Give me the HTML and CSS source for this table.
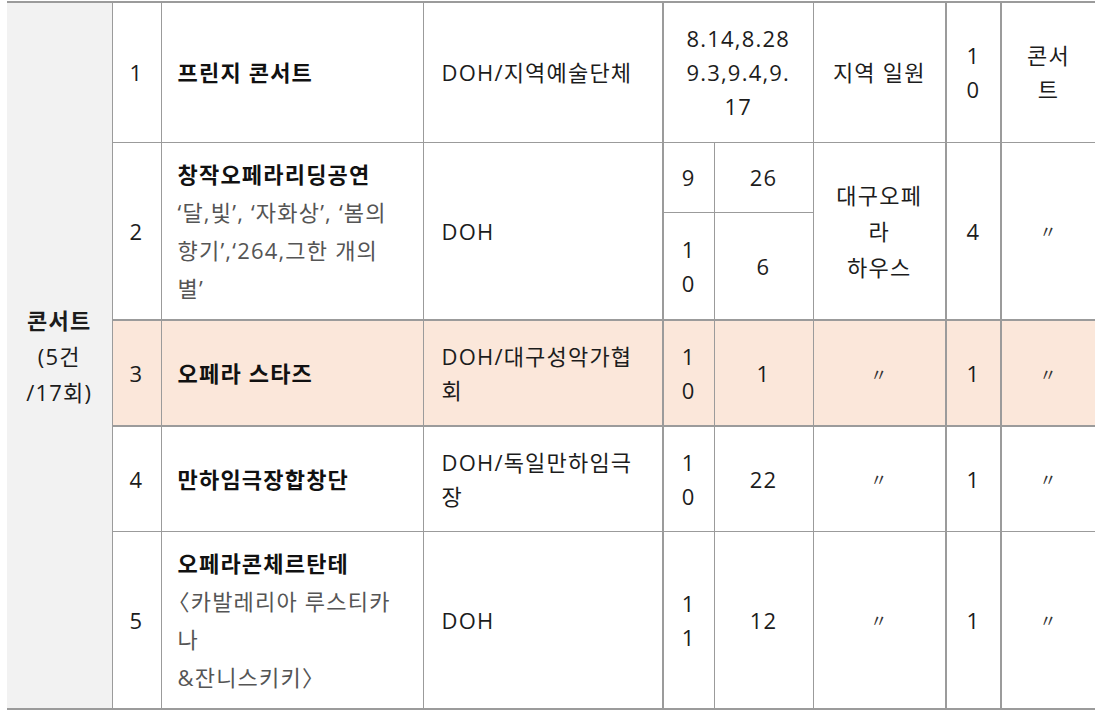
FILE: index.html
```html
<!DOCTYPE html>
<html lang="ko">
<head>
<meta charset="utf-8">
<title>콘서트 일정</title>
<link rel="stylesheet" href="styles.css">
</head>
<body>
<table class="plan">
  <colgroup>
    <col class="c-cat"><col class="c-num"><col class="c-title"><col class="c-org"><col class="c-da"><col class="c-db"><col class="c-venue"><col class="c-cnt"><col class="c-genre">
  </colgroup>
  <tbody>
    <tr class="r1">
      <td class="cat" rowspan="6"><strong>콘서트</strong><br>(5건<br>/17회)</td>
      <td class="num">1</td>
      <td class="title"><strong>프린지 콘서트</strong></td>
      <td class="org">DOH/지역예술단체</td>
      <td class="mid date" colspan="2">8.14,8.28<br>9.3,9.4,9.<br>17</td>
      <td class="mid venue">지역 일원</td>
      <td class="mid cnt">1<br>0</td>
      <td class="mid genre">콘서<br>트</td>
    </tr>
    <tr class="r2a">
      <td class="num span2" rowspan="2">2</td>
      <td class="title span2" rowspan="2"><strong>창작오페라리딩공연</strong><br><span class="sub">‘달,빛’, ‘자화상’, ‘봄의<br>향기’,‘264,그한 개의<br>별’</span></td>
      <td class="org span2" rowspan="2">DOH</td>
      <td class="mid">9</td>
      <td class="mid">26</td>
      <td class="mid venue span2" rowspan="2">대구오페<br>라<br>하우스</td>
      <td class="mid cnt span2" rowspan="2">4</td>
      <td class="mid genre span2" rowspan="2"><span class="ditto">〃</span></td>
    </tr>
    <tr class="r2b">
      <td class="mid">1<br>0</td>
      <td class="mid">6</td>
    </tr>
    <tr class="r3 hl">
      <td class="num">3</td>
      <td class="title"><strong>오페라 스타즈</strong></td>
      <td class="org">DOH/대구성악가협<br>회</td>
      <td class="mid">1<br>0</td>
      <td class="mid">1</td>
      <td class="mid venue"><span class="ditto">〃</span></td>
      <td class="mid cnt">1</td>
      <td class="mid genre"><span class="ditto">〃</span></td>
    </tr>
    <tr class="r4">
      <td class="num">4</td>
      <td class="title"><strong>만하임극장합창단</strong></td>
      <td class="org">DOH/독일만하임극<br>장</td>
      <td class="mid">1<br>0</td>
      <td class="mid">22</td>
      <td class="mid venue"><span class="ditto">〃</span></td>
      <td class="mid cnt">1</td>
      <td class="mid genre"><span class="ditto">〃</span></td>
    </tr>
    <tr class="r5">
      <td class="num">5</td>
      <td class="title"><strong>오페라콘체르탄테</strong><br><span class="sub"><span class="lb">〈</span>카발레리아 루스티카<br>나<br>&amp;잔니스키키〉</span></td>
      <td class="org">DOH</td>
      <td class="mid">1<br>1</td>
      <td class="mid">12</td>
      <td class="mid venue"><span class="ditto">〃</span></td>
      <td class="mid cnt">1</td>
      <td class="mid genre"><span class="ditto">〃</span></td>
    </tr>
  </tbody>
</table>
</body>
</html>
```

FILE: styles.css
```css
html, body {
  margin: 0;
  padding: 0;
  background: #ffffff;
}

body {
  padding: 1px 0 0 7px;
  font-family: "Open Sans", "Noto Sans CJK KR", sans-serif;
  font-size: 22px;
  letter-spacing: 1.2px;
  color: #1c1c1c;
}

.plan {
  border-collapse: collapse;
  table-layout: fixed;
  width: 1088px;
}

.c-cat { width: 105px; }
.c-num { width: 49px; }
.c-title { width: 262px; }
.c-org { width: 240px; }
.c-da { width: 51px; }
.c-db { width: 99px; }
.c-venue { width: 133px; }
.c-cnt { width: 55px; }
.c-genre { width: 94px; }

.plan td {
  border: 1px solid #9b9b9b;
  padding: 0;
  vertical-align: middle;
  line-height: 34px;
}

.r1 { height: 140px; }
.r2a { height: 70px; }
.r2b { height: 108px; }
.r3 { height: 106px; }
.r4 { height: 105px; }
.r5 { height: 178px; }

.plan .r1 td { border-top-width: 2px; }
.plan .r2b td,
.plan td.span2,
.plan .r3 td,
.plan .r5 td,
.plan td.cat { border-bottom-width: 2px; }
.plan td.cat { border-left: none; border-top-width: 2px; }
.plan td.genre { border-right: none; }
.plan td.org,
.plan td.cnt,
.plan td.venue { border-right-width: 2px; }

.plan td.cat {
  background: #f2f2f2;
  text-align: center;
  line-height: 36px;
}

.cat strong { font-weight: 700; }

.plan .hl td { background: #fbe7da; }

.num, .mid { text-align: center; }

.plan td.title {
  padding-left: 16px;
  line-height: 38px;
}

.title strong { font-weight: 700; color: #111; }

.sub { color: #555; }

.lb { margin-left: -10px; }

.plan td.org { padding-left: 18px; }

.plan td.venue { line-height: 36px; }

.ditto {
  font-size: 17px;
  color: #333;
}
```
